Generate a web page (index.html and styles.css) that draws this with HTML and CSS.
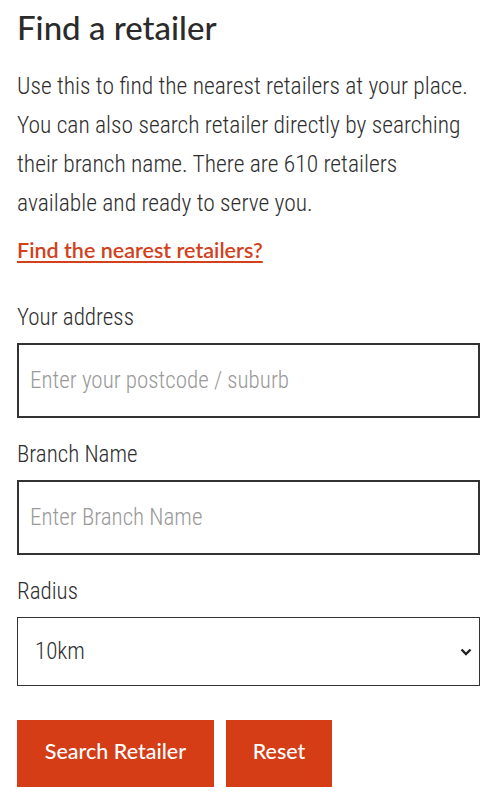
FILE: index.html
```html
<!DOCTYPE html>
<html>
<head>
<meta charset="utf-8">
<link rel="stylesheet" href="styles.css">
</head>
<body>
<main class="page">
  <h1 class="title">Find a retailer</h1>
  <p class="intro">Use this to find the nearest retailers at your place. You can also search retailer directly by searching their branch name. There are 610 retailers available and ready to serve you.</p>
  <a class="nearest" href="#">Find the nearest retailers?</a>
  <form class="form">
    <label class="field">
      <span class="label">Your address</span>
      <input class="input" type="text" placeholder="Enter your postcode / suburb">
    </label>
    <label class="field">
      <span class="label">Branch Name</span>
      <input class="input" type="text" placeholder="Enter Branch Name">
    </label>
    <label class="field">
      <span class="label">Radius</span>
      <span class="select-wrap">
        <select class="select">
          <option>10km</option>
          <option>25km</option>
          <option>50km</option>
        </select>
        <svg class="chevron" viewBox="0 0 12 8" width="12" height="8"><path d="M1.5 1.5 L6 6 L10.5 1.5" fill="none" stroke="#222" stroke-width="2.4"/></svg>
      </span>
    </label>
    <div class="actions">
      <button type="button" class="btn btn-search">Search Retailer</button>
      <button type="button" class="btn btn-reset">Reset</button>
    </div>
  </form>
</main>
</body>
</html>
```

FILE: styles.css
```css
* { box-sizing: border-box; }
html, body { margin: 0; padding: 0; background: #fff; }
.page {
  padding: 7px 20px 0 17px;
  color: #333;
  font-family: "Roboto Condensed", Roboto, sans-serif;
  font-stretch: condensed;
  font-weight: 300;
}
.title {
  margin: 0;
  font-family: Lato, "Open Sans", sans-serif;
  font-stretch: normal;
  font-weight: 500;
  font-size: 33px;
  line-height: 40px;
  color: #2b2b2b;
}
.intro {
  margin: 20px 0 0;
  font-size: 23.5px;
  line-height: 39px;
  color: #2e2e2e;
}
.nearest {
  display: inline-block;
  margin-top: 14px;
  font-family: Lato, "Open Sans", sans-serif;
  font-stretch: normal;
  font-weight: 600;
  font-size: 21.5px;
  line-height: 26px;
  color: #d2401c;
  text-decoration: underline;
  text-underline-offset: 3px;
  text-decoration-thickness: 2px;
}
.form {
  display: flex;
  flex-direction: column;
  margin-top: 42px;
}
.field {
  display: flex;
  flex-direction: column;
  gap: 12px;
  margin-bottom: 24px;
}
.label {
  font-size: 23px;
  line-height: 26px;
  color: #2e2e2e;
}
.input {
  height: 75px;
  width: 100%;
  border: 2px solid #333;
  border-radius: 0;
  padding: 0 11px;
  font-family: inherit;
  font-stretch: inherit;
  font-weight: 300;
  font-size: 23px;
  color: #333;
  outline: none;
}
.input::placeholder { color: #999; }
.select-wrap {
  position: relative;
  display: block;
}
.select {
  appearance: none;
  -webkit-appearance: none;
  width: 100%;
  height: 69px;
  border: 1px solid #333;
  border-radius: 0;
  background: #fff;
  padding: 0 17px;
  font-family: inherit;
  font-stretch: inherit;
  font-weight: 300;
  font-size: 23px;
  color: #2e2e2e;
}
.chevron {
  position: absolute;
  right: 8px;
  top: 31px;
  pointer-events: none;
}
.actions {
  display: flex;
  gap: 12px;
  margin-top: 10px;
}
.btn {
  height: 67px;
  border: 0;
  border-radius: 0;
  background: #d43d16;
  color: #fff;
  font-family: Lato, "Open Sans", sans-serif;
  font-stretch: normal;
  font-weight: 500;
  font-size: 21.5px;
  padding: 0 0 6px;
}
.btn-search { width: 197px; }
.btn-reset { width: 106px; }
```
